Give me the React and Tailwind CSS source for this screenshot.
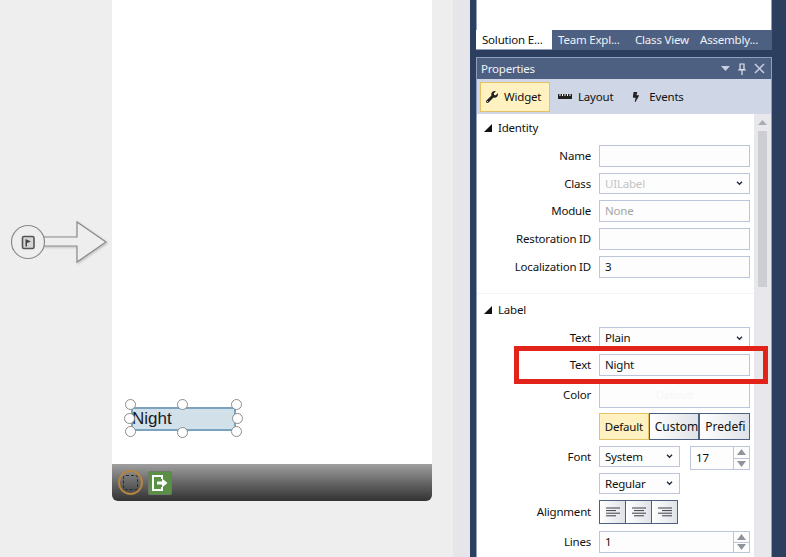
import { FaWrench, FaBolt } from "react-icons/fa"

const fieldBorder = "border border-[#bcc6da]"

const Chevron = () => (
  <svg width="7" height="5" viewBox="0 0 8 6" className="shrink-0">
    <path d="M1 1 L4 4 L7 1" fill="none" stroke="#1e2a3a" strokeWidth="1.6" />
  </svg>
)

const Row = ({ label, className = "", labelClass = "", children }) => (
  <div className={`flex items-center ${className}`}>
    <div className={`w-[114px] shrink-0 text-right leading-none text-[#111] ${labelClass}`}>{label}</div>
    <div className="ml-2 flex w-[151px] shrink-0">{children}</div>
  </div>
)

const Field = ({ value, muted, className = "h-[22px]" }) => (
  <div className={`flex w-full items-center bg-[#fdfdfd] px-[5px] ${fieldBorder} ${className} ${muted ? "text-[#a5a5a5]" : "text-[#111]"}`}>
    {value}
  </div>
)

const Select = ({ value, muted, className = "w-full" }) => (
  <div className={`flex h-[21px] items-center justify-between bg-[#fdfdfd] pl-[5px] pr-[6px] ${fieldBorder} ${className} ${muted ? "text-[#c4c4c4]" : "text-[#111]"}`}>
    <span>{value}</span>
    <Chevron />
  </div>
)

const Spinner = ({ value, className = "" }) => (
  <div className={`flex items-stretch bg-[#fdfdfd] ${fieldBorder} ${className}`}>
    <div className="flex flex-1 items-center pl-[5px] text-[#111]">{value}</div>
    <div className="flex w-4 flex-col border-l border-[#bcc6da]">
      <div className="flex flex-1 items-center justify-center border-b border-[#bcc6da]">
        <svg width="9" height="6" viewBox="0 0 9 6"><path d="M4.5 0 L9 6 L0 6 Z" fill="#8f949c" /></svg>
      </div>
      <div className="flex flex-1 items-center justify-center">
        <svg width="9" height="6" viewBox="0 0 9 6"><path d="M0 0 L9 0 L4.5 6 Z" fill="#8f949c" /></svg>
      </div>
    </div>
  </div>
)

const SectionHead = ({ title, className = "" }) => (
  <div className={`flex items-center pl-[7px] text-[#111] ${className}`}>
    <svg width="8" height="8" viewBox="0 0 8 8"><path d="M8 0 L8 8 L0 8 Z" fill="#111" /></svg>
    <span className="ml-[6px] leading-none">{title}</span>
  </div>
)

const AlignButton = ({ lines }) => (
  <div className="-ml-px flex h-6 w-[27px] items-center justify-center border border-[#4d6082] bg-gradient-to-r from-white to-[#dfe2e8] first:ml-0">
    <svg width="16" height="10" viewBox="0 0 16 10">
      {lines.map(([x1, x2], i) => (
        <line key={i} x1={x1} x2={x2} y1={1 + i * 2.6} y2={1 + i * 2.6} stroke="#3a3f47" strokeWidth="1" />
      ))}
    </svg>
  </div>
)

const ChoiceButton = ({ label, active }) => (
  <div
    className={
      active
        ? "flex h-[27px] w-[50px] items-center justify-center border border-[#e5c365] bg-[#fff2c0] text-[#111]"
        : "flex h-[27px] w-[51px] items-center overflow-hidden border border-[#4d6082] bg-gradient-to-r from-white to-[#dfe2e8] pl-[5px] text-[12px] tracking-normal whitespace-nowrap text-[#111]"
    }
  >
    {label}
  </div>
)

const Handle = ({ className }) => (
  <span className={`absolute size-[11px] rounded-full border border-[#8c8c8c] bg-white ${className}`} />
)

const EntryArrow = () => (
  <svg width="110" height="48" viewBox="0 0 110 48" className="absolute left-0 top-[218px]">
    <defs>
      <filter id="soft" x="-10%" y="-10%" width="120%" height="120%">
        <feDropShadow dx="1" dy="1" stdDeviation="1" floodColor="#000" floodOpacity="0.22" />
      </filter>
    </defs>
    <path
      d="M43 19 L77 19 L77 4 L106 24 L77 44 L77 28 L43 28"
      fill="#eeeeee"
      stroke="#8a8a8a"
      strokeWidth="1.2"
      filter="url(#soft)"
    />
    <circle cx="28" cy="24" r="16.5" fill="#eeeeee" stroke="#8a8a8a" strokeWidth="1.2" />
    <rect x="22.5" y="18.5" width="11.5" height="12" rx="1.5" fill="#d6d6d6" stroke="#555" strokeWidth="1.6" />
    <path d="M25.5 21 L31 23.5 L27 25 L27 28.5 L25.5 28.5 Z" fill="#444" />
  </svg>
)

const Canvas = () => (
  <div className="relative h-full w-[453px] shrink-0 bg-[#eeeeee]">
    <EntryArrow />
    <div className="ml-[112px] w-[320px]">
      <div className="flex h-[464px] flex-col justify-end bg-white pb-[33px] pl-[19px]">
        <div className="relative flex h-6 w-[105px] items-center rounded-[2px] border-2 border-[#7ba3bf] bg-[#d2e0ea] font-['Liberation_Sans',sans-serif] text-[17px] leading-none tracking-normal text-[#1a1a1a]">
          <span className="-mt-[2px] -ml-px">Night</span>
          <Handle className="-left-[8px] -top-[10px]" />
          <Handle className="left-[44px] -top-[10px]" />
          <Handle className="-right-[8px] -top-[10px]" />
          <Handle className="-left-[9px] top-[4px]" />
          <Handle className="-right-[9px] top-[4px]" />
          <Handle className="-left-[8px] -bottom-[8px]" />
          <Handle className="left-[44px] -bottom-[9px]" />
          <Handle className="-right-[8px] -bottom-[8px]" />
        </div>
      </div>
      <div className="flex h-[37px] items-center rounded-b-[6px] bg-gradient-to-b from-[#a0a0a0] to-[#333333] pl-[6px]">
        <div className="flex size-[25px] items-center justify-center rounded-full border-2 border-[#b5843f]">
          <div className="size-[15px] rounded-[3px] border border-dashed border-[#2b2b2b]" />
        </div>
        <div className="ml-[5px] flex size-6 items-center justify-center rounded-[2px] border border-[#6d7a66] bg-[#5a9046]">
          <svg width="18" height="18" viewBox="0 0 18 18">
            <path d="M11 5 L11 2 L2 2 L2 16 L11 16 L11 13" fill="none" stroke="white" strokeWidth="2" />
            <path d="M6 7.5 L11 7.5 L11 4.5 L16.5 9 L11 13.5 L11 10.5 L6 10.5 Z" fill="white" />
          </svg>
        </div>
      </div>
    </div>
  </div>
)

const DockTabs = () => (
  <div className="flex h-5 bg-[#4d6082] text-[#f0f2f6]">
    <div className="flex w-[76px] items-center border-b border-[#8f9fbf] bg-white pl-[6px] text-[#111]">Solution E...</div>
    <div className="flex w-[77px] items-center pl-[6px]">Team Expl...</div>
    <div className="flex w-[65px] items-center pl-[6px]">Class View</div>
    <div className="flex items-center pl-[6px]">Assembly...</div>
  </div>
)

const PropertiesHeader = () => (
  <div className="flex h-[21px] items-center justify-between bg-[#4d6082] pl-[4px] pr-[6px] text-[#f0f2f6]">
    <span>Properties</span>
    <div className="flex items-center gap-[7px]">
      <svg width="9" height="5" viewBox="0 0 9 5"><path d="M0 0 L9 0 L4.5 5 Z" fill="#c8d0e0" /></svg>
      <svg width="10" height="12" viewBox="0 0 10 12">
        <path d="M3 1 H7 V6.5 H3 Z M1 7 H9 M5 7 V12" fill="none" stroke="#dfe4ee" strokeWidth="1.2" />
      </svg>
      <svg width="11" height="11" viewBox="0 0 11 11">
        <path d="M1 1 L10 10 M10 1 L1 10" stroke="#c8d0e0" strokeWidth="1.5" />
      </svg>
    </div>
  </div>
)

const PropertiesTabs = () => (
  <div className="flex h-[35px] items-center bg-[#cfd6e5] pl-[3px] text-[#111]">
    <div className="flex h-[30px] w-[70px] items-center gap-[6px] border border-[#e5c365] bg-[#fff2c0] pl-[5px]">
      <FaWrench className="size-3 text-[#222]" />
      Widget
    </div>
    <div className="ml-[8px] flex items-center gap-[6px]">
      <svg width="14" height="5" viewBox="0 0 14 5">
        <rect width="14" height="5" fill="#222" />
        <path d="M2 0 V2 M4.5 0 V2 M7 0 V2 M9.5 0 V2 M12 0 V2" stroke="#fff" strokeWidth="1" />
      </svg>
      Layout
    </div>
    <div className="ml-[18px] flex items-center gap-[8px]">
      <FaBolt className="size-[10px] text-[#222]" />
      Events
    </div>
  </div>
)

const PropertyList = () => (
  <div className="w-[277px] shrink-0 bg-white">
    <SectionHead title="Identity" className="h-[28px]" />
    <Row label="Name" className="mt-[3px]"><Field /></Row>
    <Row label="Class" className="mt-[6px]"><Select value="UILabel" muted /></Row>
    <Row label="Module" className="mt-[6px]"><Field value="None" muted /></Row>
    <Row label="Restoration ID" className="mt-[6px]"><Field /></Row>
    <Row label="Localization ID" className="mt-[6px]"><Field value="3" /></Row>
    <div className="mt-[15px] border-t border-[#f5f5f5]" />
    <SectionHead title="Label" className="mt-[8px] h-[16px]" />
    <Row label="Text" className="mt-[9px]"><Select value="Plain" className="h-[22px] w-full" /></Row>
    <Row label="Text" className="mt-[5px]"><Field value="Night" /></Row>
    <Row label="Color" className="mt-[6px]">
      <Field className="h-[26px] justify-center !text-[#f7f7f7]" value="Default" />
    </Row>
    <Row className="mt-[5px]">
      <ChoiceButton label="Default" active />
      <ChoiceButton label="Custom" />
      <ChoiceButton label="Predefi" />
    </Row>
    <Row label="Font" className="mt-[6px] items-start" labelClass="pt-[5px]">
      <div className="flex h-6 w-full items-start justify-between">
        <Select value="System" className="w-[81px]" />
        <Spinner value="17" className="h-6 w-[60px]" />
      </div>
    </Row>
    <Row className="mt-[3px]"><Select value="Regular" className="w-[81px]" /></Row>
    <Row label="Alignment" className="mt-[6px]">
      <AlignButton lines={[[1, 15], [1, 11], [1, 15], [1, 11]]} />
      <AlignButton lines={[[1, 15], [3, 13], [1, 15], [3, 13]]} />
      <AlignButton lines={[[1, 15], [5, 15], [1, 15], [5, 15]]} />
    </Row>
    <Row label="Lines" className="mt-[7px]"><Spinner value="1" className="h-[22px] w-full" /></Row>
  </div>
)

const Scrollbar = () => (
  <div className="flex flex-1 flex-col items-center bg-[#e8e8ec] pt-[6px]">
    <svg width="9" height="5" viewBox="0 0 9 5"><path d="M4.5 0 L9 5 L0 5 Z" fill="#a8acb4" /></svg>
    <div className="mt-[6px] h-[156px] w-[9px] bg-[#cdced3]" />
  </div>
)

const Dock = () => (
  <div className="flex h-full w-[316px] shrink-0 flex-col bg-[#2d3f5f] pl-[6px] pr-[14px]">
    <div className="h-[30px] border-x border-[#8f9fbf] bg-white" />
    <DockTabs />
    <div className="mt-[7px] flex min-h-0 flex-1 flex-col border-x border-t border-[#8f9fbf]">
      <PropertiesHeader />
      <PropertiesTabs />
      <div className="flex min-h-0 flex-1 overflow-hidden bg-white">
        <PropertyList />
        <Scrollbar />
      </div>
    </div>
  </div>
)

export default function App() {
  return (
    <div className="relative flex h-[557px] w-[786px] overflow-hidden font-['Noto_Sans',sans-serif] text-[11.5px] tracking-[-0.2px]">
      <Canvas />
      <div className="h-full w-[17px] shrink-0 bg-[#e6e6ea]" />
      <Dock />
      <div className="absolute left-[514px] top-[346px] h-[38px] w-[254px] border-[5px] border-[#e2231a]" />
    </div>
  )
}
